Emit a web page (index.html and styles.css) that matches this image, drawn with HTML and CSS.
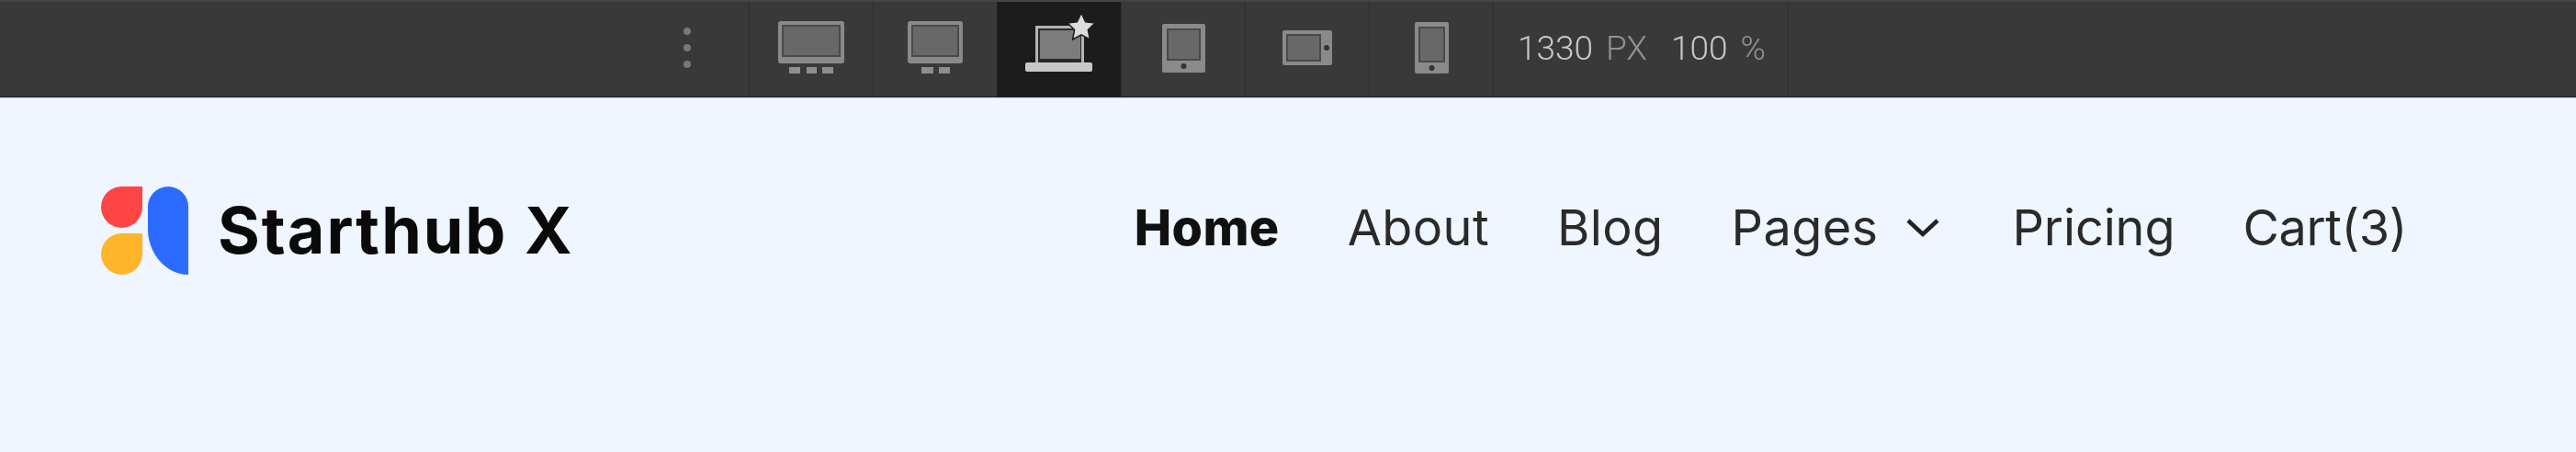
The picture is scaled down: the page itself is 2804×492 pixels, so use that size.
FILE: index.html
```html
<!DOCTYPE html>
<html lang="en">
<head>
    <meta charset="UTF-8">
    <meta name="viewport" content="width=device-width, initial-scale=1.0">
    <title>Starthub X</title>
    <link rel="stylesheet" href="styles.css">
</head>
<body>

    <!-- Device toolbar -->
    <div class="toolbar">
        <div class="handle"><span></span><span></span><span></span></div>

        <div class="cell">
            <svg width="72" height="58" viewBox="0 0 72 58">
                <rect width="72" height="46" rx="3" fill="#8a8a8a"/>
                <rect x="4" y="4" width="64" height="35" fill="#4a4a4a"/>
                <rect x="6" y="6" width="60" height="31" fill="#686868"/>
                <rect x="12" y="50" width="12" height="7" fill="#8e8e8e"/>
                <rect x="31" y="50" width="11" height="7" fill="#8e8e8e"/>
                <rect x="48" y="50" width="12" height="7" fill="#8e8e8e"/>
            </svg>
        </div>
        <div class="cell">
            <svg width="60" height="58" viewBox="0 0 60 58">
                <rect width="60" height="46" rx="3" fill="#8a8a8a"/>
                <rect x="4" y="4" width="52" height="35" fill="#4a4a4a"/>
                <rect x="6" y="6" width="48" height="31" fill="#686868"/>
                <rect x="15" y="50" width="13" height="7" fill="#8e8e8e"/>
                <rect x="34" y="50" width="12" height="7" fill="#8e8e8e"/>
            </svg>
        </div>
        <div class="cell active">
            <svg width="76" height="64" viewBox="0 0 76 64">
                <rect x="12.5" y="15.5" width="50" height="41" fill="#2a2a2a" stroke="#b4b4b4" stroke-width="3"/>
                <rect x="16" y="19" width="44" height="31" fill="#7c7c7c"/>
                <rect x="0" y="54" width="73" height="10" rx="2" fill="#c8c8c8"/>
                <path d="M61 0l4.6 9.8 10.4 1.3-7.6 7.3 2 10.6-9.4-5.2-9.4 5.2 2-10.6-7.6-7.3 10.4-1.3z" fill="#dcdcdc" stroke="#1c1c1c" stroke-width="1.5"/>
            </svg>
        </div>
        <div class="cell">
            <svg width="47" height="53" viewBox="0 0 47 53">
                <rect width="47" height="53" rx="2" fill="#8a8a8a"/>
                <rect x="5" y="5" width="37" height="35" fill="#4a4a4a"/>
                <rect x="7" y="7" width="33" height="31" fill="#686868"/>
                <circle cx="23.5" cy="46" r="3" fill="#333"/>
            </svg>
        </div>
        <div class="cell">
            <svg width="54" height="38" viewBox="0 0 54 38">
                <rect width="54" height="38" rx="2" fill="#8a8a8a"/>
                <rect x="4" y="4" width="38" height="30" fill="#4a4a4a"/>
                <rect x="6" y="6" width="34" height="26" fill="#686868"/>
                <circle cx="48" cy="19" r="3" fill="#333"/>
            </svg>
        </div>
        <div class="cell">
            <svg width="37" height="56" viewBox="0 0 37 56">
                <rect width="37" height="56" rx="2" fill="#8a8a8a"/>
                <rect x="4" y="5" width="29" height="39" fill="#4a4a4a"/>
                <rect x="6" y="7" width="25" height="35" fill="#686868"/>
                <circle cx="18.5" cy="50" r="3" fill="#333"/>
            </svg>
        </div>

        <div class="size-box">
            <span class="num">1330</span><span class="unit">PX</span>
            <span class="num zoom">100</span><span class="unit">%</span>
        </div>
    </div>

    <!-- Site header -->
    <div class="header">
        <a class="brand" href="#">
            <svg class="logo" width="95" height="96" viewBox="0 0 95 96">
                <path d="M22.5 0H45V22.5A22.5 22.5 0 1 1 0 22.5A22.5 22.5 0 0 1 22.5 0Z" fill="#ff4444"/>
                <path d="M22.5 51H45V73.5A22.5 22.5 0 1 1 0 73.5A22.5 22.5 0 0 1 22.5 51Z" fill="#ffb429"/>
                <path d="M51 22a22 22 0 0 1 44 0V96C70 96 51 72 51 47Z" fill="#2c6bff"/>
            </svg>
            <span class="brand-name">Starthub X</span>
        </a>
        <div class="nav">
            <a class="current" href="#">Home</a>
            <a href="#">About</a>
            <a href="#">Blog</a>
            <a class="pages" href="#">Pages
                <svg width="38" height="24" viewBox="0 0 38 24"><path d="M3 5l16 15L35 5" fill="none" stroke="#222" stroke-width="4.5"/></svg>
            </a>
            <a class="pricing" href="#">Pricing</a>
            <a class="cart" href="#">Cart(3)</a>
        </div>
    </div>

</body>
</html>
```

FILE: styles.css
```css
body {
    margin: 0;
    padding: 0;
    background-color: #eff6ff;
    font-family: Inter, Arial, sans-serif;
    height: 492px;
    overflow: hidden;
}
a {
    text-decoration: none;
    color: inherit;
}

.toolbar {
    display: flex;
    height: 103px;
    padding-left: 680px;
    background: #393939;
    border-top: 2px solid #444;
    border-bottom: 1px solid #1e2124;
    box-shadow: 0 1px 0 #c3cbd8;
    filter: blur(0.5px);
}
.handle {
    width: 135px;
    padding-bottom: 3px;
    box-sizing: border-box;
    display: flex;
    flex-direction: column;
    align-items: center;
    justify-content: center;
    gap: 10px;
}
.handle span {
    width: 8px;
    height: 8px;
    border-radius: 50%;
    background: #777;
}
.cell {
    width: 135px;
    padding-bottom: 3px;
    display: flex;
    align-items: center;
    justify-content: center;
    border-left: 1px solid #2f2f2f;
    box-sizing: border-box;
}
.cell.active {
    background: #1c1c1c;
    border-left: 0;
    padding-left: 3px;
    padding-bottom: 16px;
}
.size-box {
    width: 322px;
    padding-left: 26px;
    padding-bottom: 3px;
    box-sizing: border-box;
    display: flex;
    align-items: center;
    border-left: 1px solid #2f2f2f;
    border-right: 1px solid #2f2f2f;
    font-family: Roboto, Arial, sans-serif;
    font-weight: 300;
    font-size: 37px;
}
.num {
    color: #c8c8c8;
}
.unit {
    color: #929292;
    margin-left: 14px;
}
.num.zoom {
    margin-left: 26px;
}

.header {
    display: flex;
    justify-content: space-between;
    align-items: center;
    padding: 97px 184px 0 110px;
    filter: blur(0.6px);
}
.brand {
    display: flex;
    align-items: center;
    gap: 32px;
}
.brand-name {
    font-size: 70px;
    font-weight: 700;
    letter-spacing: 2px;
    color: #0a0a0a;
    line-height: 96px;
}
.nav {
    display: flex;
    align-items: center;
    gap: 74px;
    font-size: 54px;
    letter-spacing: 0.4px;
    font-weight: 400;
    color: #2a2a2a;
    margin-bottom: 8px;
}
.nav a {
    display: flex;
    align-items: center;
}
.nav .current {
    font-weight: 800;
    color: #111;
}
.nav .pages svg {
    margin-left: 30px;
    margin-right: 4px;
}
.nav .pricing {
    letter-spacing: -0.1px;
}
.nav .cart {
    letter-spacing: -0.4px;
}
```
